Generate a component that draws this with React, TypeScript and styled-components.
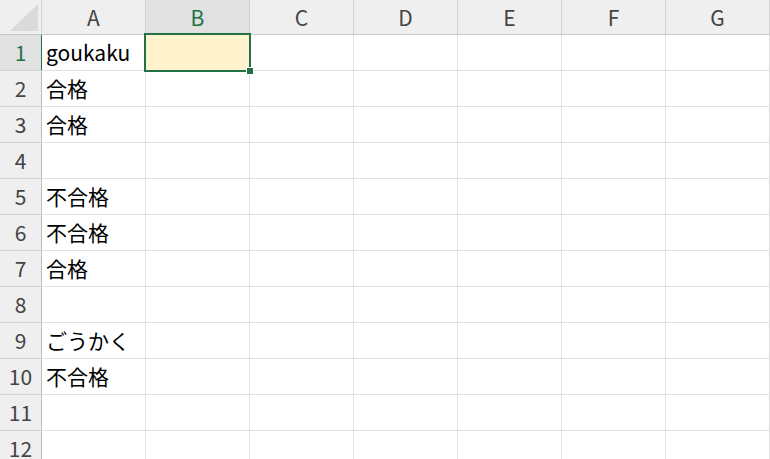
import React from 'react';
import styled, { createGlobalStyle, css } from 'styled-components';

const green = '#217346';
const fontStack = `'Noto Sans CJK JP', 'Noto Sans', sans-serif`;

const GlobalStyle = createGlobalStyle`
  html, body {
    margin: 0;
    padding: 0;
    background: #fff;
    overflow: hidden;
  }
`;

const Sheet = styled.div`
  display: grid;
  grid-template-columns: 42px repeat(7, 104px);
  grid-template-rows: 35px repeat(12, 36px);
  width: 770px;
  height: 459px;
  overflow: hidden;
  font-family: ${fontStack};
  font-size: 21px;
`;

const Corner = styled.div`
  background: #efefef;
  border-right: 1px solid #d4d4d4;
  border-bottom: 1px solid #c8c8c8;
  display: flex;
  align-items: flex-end;
  justify-content: flex-end;
  padding: 0 3px 3px 0;
`;

const ColHeader = styled.div<{ $active?: boolean }>`
  background: ${(p) => (p.$active ? '#e1e1e1' : '#efefef')};
  color: ${(p) => (p.$active ? green : '#444')};
  border-right: 1px solid #d4d4d4;
  border-bottom: 1px solid #c8c8c8;
  display: flex;
  align-items: center;
  justify-content: center;
  padding-bottom: 1px;
`;

const RowHeader = styled.div<{ $active?: boolean }>`
  background: ${(p) => (p.$active ? '#e1e1e1' : '#efefef')};
  color: ${(p) => (p.$active ? green : '#444')};
  border-bottom: 1px solid #d4d4d4;
  display: flex;
  align-items: center;
  justify-content: center;
  padding-bottom: 2px;
  ${(p) =>
    p.$active
      ? css`
          border-right: 2px solid ${green};
          margin-right: -1px;
          position: relative;
        `
      : css`
          border-right: 1px solid #bdbdbd;
        `}
`;

const Cell = styled.div<{ $selected?: boolean }>`
  position: relative;
  z-index: ${(p) => (p.$selected ? 2 : 'auto')};
  border-right: 1px solid #e1e1e1;
  border-bottom: 1px solid #e1e1e1;
  display: flex;
  align-items: center;
  padding: 0 0 2px 4px;
  color: #000;
  white-space: nowrap;
  background: ${(p) => (p.$selected ? '#fff2cc' : '#fff')};
`;

const Selection = styled.div`
  position: absolute;
  top: -2px;
  left: -2px;
  right: -2px;
  bottom: -2px;
  border: 2px solid ${green};
  pointer-events: none;
`;

const FillHandle = styled.div`
  position: absolute;
  right: -4px;
  bottom: -4px;
  width: 6px;
  height: 6px;
  background: ${green};
  outline: 1px solid #fff;
`;

const columns = ['A', 'B', 'C', 'D', 'E', 'F', 'G'];
const values: Record<number, string> = {
  1: 'goukaku',
  2: '合格',
  3: '合格',
  5: '不合格',
  6: '不合格',
  7: '合格',
  9: 'ごうかく',
  10: '不合格',
};

const App = () => {
  const rows = Array.from({ length: 12 }, (_, i) => i + 1);
  return (
    <>
      <GlobalStyle />
      <Sheet>
        <Corner>
          <svg width="28" height="27" viewBox="0 0 28 27">
            <polygon points="0,27 28,0 28,27" fill="#dadada" />
          </svg>
        </Corner>
        {columns.map((c) => (
          <ColHeader key={c} $active={c === 'B'}>
            {c}
          </ColHeader>
        ))}
        {rows.map((r) => (
          <React.Fragment key={r}>
            <RowHeader $active={r === 1}>{r}</RowHeader>
            {columns.map((c) => {
              const selected = r === 1 && c === 'B';
              return (
                <Cell key={c} $selected={selected}>
                  {c === 'A' ? values[r] : null}
                  {selected && (
                    <Selection>
                      <FillHandle />
                    </Selection>
                  )}
                </Cell>
              );
            })}
          </React.Fragment>
        ))}
      </Sheet>
    </>
  );
};

export default App;
